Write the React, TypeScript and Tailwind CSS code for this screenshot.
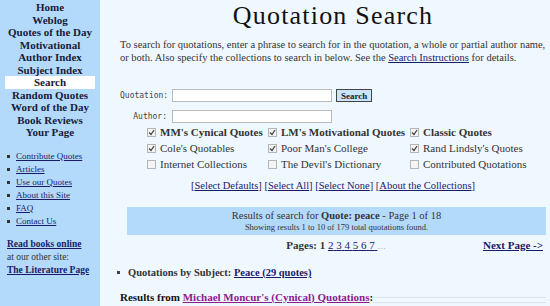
const nav = [
  'Home',
  'Weblog',
  'Quotes of the Day',
  'Motivational',
  'Author Index',
  'Subject Index',
  'Search',
  'Random Quotes',
  'Word of the Day',
  'Book Reviews',
  'Your Page',
]

const links = ['Contribute Quotes', 'Articles', 'Use our Quotes', 'About this Site', 'FAQ', 'Contact Us']

const collections = [
  [
    { label: "MM's Cynical Quotes", on: true, bold: true },
    { label: "LM's Motivational Quotes", on: true, bold: true },
    { label: 'Classic Quotes', on: true, bold: true },
  ],
  [
    { label: "Cole's Quotables", on: true },
    { label: "Poor Man's College", on: true },
    { label: "Rand Lindsly's Quotes", on: true },
  ],
  [
    { label: 'Internet Collections', on: false },
    { label: "The Devil's Dictionary", on: false },
    { label: 'Contributed Quotations', on: false },
  ],
]

function Box({ on }: { on: boolean }) {
  return (
    <span className="inline-flex h-[9px] w-[9px] items-center justify-center border border-[#b5b5b5] bg-[#f4f4f4]">
      {on && (
        <svg width="7" height="7" viewBox="0 0 7 7">
          <path d="M1 3.5 L3 5.5 L6 1" stroke="#444" strokeWidth="1.3" fill="none" />
        </svg>
      )}
    </span>
  )
}

export default function App() {
  return (
    <div
      className="flex h-[306px] w-[550px] overflow-hidden bg-[#f0f8ff] text-[#222]"
      style={{ fontFamily: '"Liberation Serif", serif' }}
    >
      {/* Sidebar */}
      <aside className="w-[100px] shrink-0 bg-[#b3dafa] pt-[1px]">
        <ul className="flex flex-col items-center text-[11px] font-bold leading-[12.5px] text-[#1a1a3a]">
          {nav.map((n) => (
            <li
              key={n}
              className={n === 'Search' ? 'w-[90px] bg-white text-center' : 'text-center'}
            >
              {n}
            </li>
          ))}
        </ul>
        <ul className="mt-[13px] flex flex-col gap-[4px] pl-[7px] text-[9px] leading-[9px]">
          {links.map((l) => (
            <li key={l} className="flex items-center gap-[6px]">
              <span className="h-[3px] w-[3px] bg-[#333]" />
              <a className="text-[#1a1a6a] underline">{l}</a>
            </li>
          ))}
        </ul>
        <div className="mt-[12px] pl-[7px] text-[9.5px] leading-[13px] text-[#333]">
          <a className="font-bold text-[#1a1a6a] underline">Read books online</a>
          <div>at our other site:</div>
          <a className="font-bold text-[#1a1a6a] underline">The Literature Page</a>
        </div>
      </aside>

      {/* Main */}
      <main className="flex-1 pl-[20px] pr-[4px]">
        <h1 className="mt-[1px] text-center text-[26px] leading-[30px] tracking-[1.2px] text-[#111]">
          Quotation Search
        </h1>
        <p className="mt-[8px] text-[10.5px] leading-[12.5px] text-[#333]">
          To search for quotations, enter a phrase to search for in the quotation, a whole or partial author name,
          or both. Also specify the collections to search in below. See the{' '}
          <a className="text-[#1a1a6a] underline">Search Instructions</a> for details.
        </p>

        <div className="mt-[25px] flex flex-col gap-[8px]">
          <div className="flex items-center">
            <label
              className="w-[52px] pr-[5px] text-right text-[8px] text-[#444]"
              style={{ fontFamily: '"DejaVu Sans Mono", monospace' }}
            >
              Quotation:
            </label>
            <span className="h-[13px] w-[160px] border border-[#bbb] bg-white" />
            <button className="ml-[4px] h-[13px] border border-[#444] bg-[#c9e4fb] px-[4px] text-[9px] font-bold leading-[10px] text-[#222]">
              Search
            </button>
          </div>
          <div className="flex items-center">
            <label
              className="w-[52px] pr-[5px] text-right text-[8px] text-[#444]"
              style={{ fontFamily: '"DejaVu Sans Mono", monospace' }}
            >
              Author:
            </label>
            <span className="h-[13px] w-[160px] border border-[#bbb] bg-white" />
          </div>
        </div>

        <div className="ml-[27px] mt-[3px] grid grid-cols-[121px_142px_130px] gap-y-[3px] text-[11px] leading-[13px] text-[#333]">
          {collections.flat().map((c) => (
            <div key={c.label} className="flex items-center gap-[4px]">
              <Box on={c.on} />
              <span className={c.bold ? 'font-bold' : ''}>{c.label}</span>
            </div>
          ))}
        </div>

        <div className="mt-[8px] text-center text-[10.5px] leading-[13px] text-[#1a1a6a]">
          [<a className="underline">Select Defaults</a>] [<a className="underline">Select All</a>] [
          <a className="underline">Select None</a>] [<a className="underline">About the Collections</a>]
        </div>

        <div className="ml-[7px] mt-[15px] bg-[#b3dafa] py-[3px] text-center text-[#333]">
          <div className="text-[10.5px] leading-[12px]">
            Results of search for <b>Quote: peace</b> - Page 1 of 18
          </div>
          <div className="text-[8.5px] leading-[10px]">Showing results 1 to 10 of 179 total quotations found.</div>
        </div>

        <div className="relative mt-[3px] h-[14px] text-[11px] leading-[14px]">
          <div className="pl-[6px] text-center text-[#333]">
            <b>Pages: 1</b>{' '}
            {['2', '3', '4', '5', '6', '7'].map((p) => (
              <a key={p} className="text-[#1a1a6a] underline">
                {p}{' '}
              </a>
            ))}
            <span className="text-[#bbb]">...</span>
          </div>
          <a className="absolute right-[3px] top-0 font-bold text-[#1a1a6a] underline">Next Page -&gt;</a>
        </div>

        <div className="mt-[13px] flex items-center gap-[8px] text-[10.5px] font-bold text-[#333]">
          <span className="-ml-[3px] h-[3px] w-[3px] bg-[#444]" />
          <span>
            Quotations by Subject: <a className="text-[#1a1a6a] underline">Peace (29 quotes)</a>
          </span>
        </div>

        <div className="mt-[10px] flex items-start text-[11px] font-bold leading-[13px] text-[#111]">
          <span>
            Results from <a className="text-[#8b1a8b] underline">Michael Moncur's (Cynical) Quotations</a>:
          </span>
          <div className="mt-[6px] h-[6px] flex-1 border-y border-[#dde3ea]" />
        </div>
      </main>
    </div>
  )
}
